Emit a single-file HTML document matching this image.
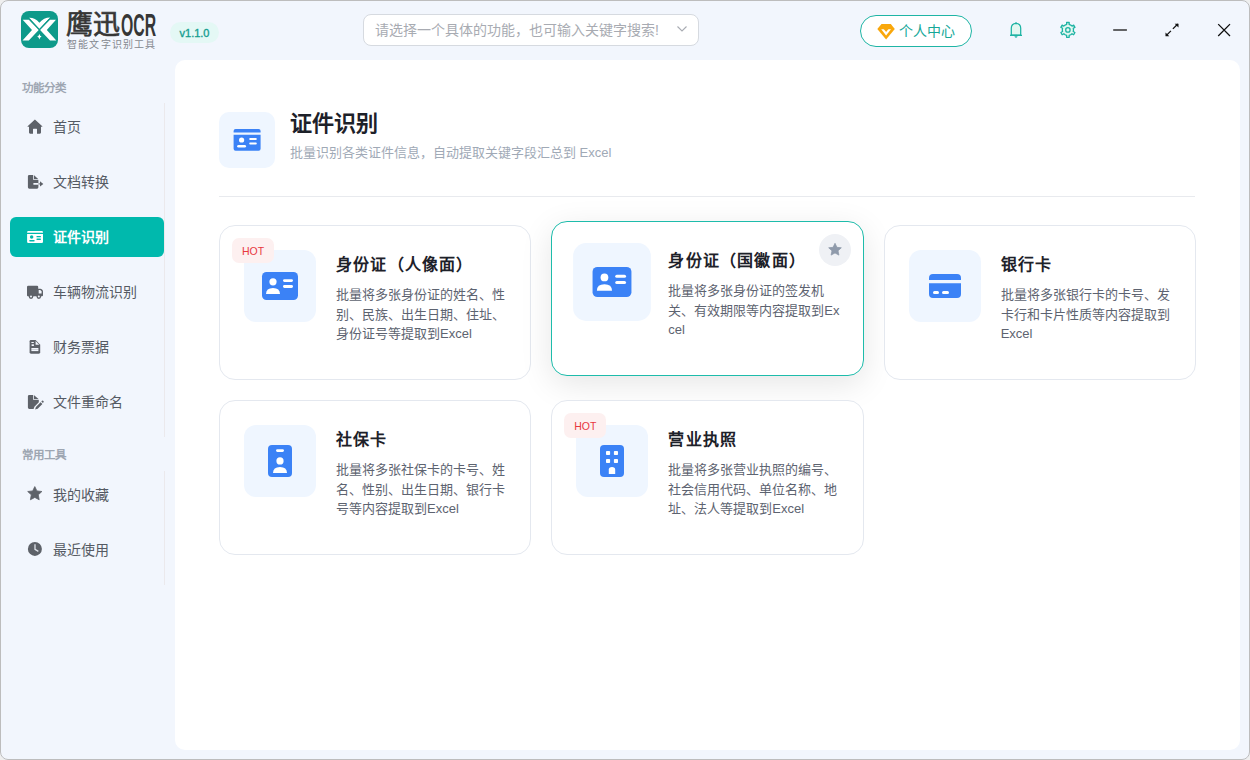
<!DOCTYPE html>
<html lang="zh-CN"><head><meta charset="utf-8">
<style>
*{margin:0;padding:0;box-sizing:border-box}
html,body{width:1250px;height:760px;overflow:hidden;background:#efefef}
body{font-family:"Liberation Sans",sans-serif;position:relative;text-spacing-trim:space-all}
.win{position:absolute;left:0;top:0;width:1250px;height:760px;background:#f2f6fd;border-radius:8px;overflow:hidden}
.frame{position:absolute;left:0;top:0;width:1250px;height:760px;border:1px solid #bdbdbd;border-radius:8px;pointer-events:none}
.abs{position:absolute}
.logo{left:21px;top:11.2px;width:37px;height:37px}
.brand{left:66px;top:10px;font-size:27px;font-weight:normal;-webkit-text-stroke:0.7px #363636;color:#363636;letter-spacing:0px;line-height:30px}
.ocr{left:121px;top:8.5px;font-size:31px;color:#363636;line-height:34px;transform:scaleX(0.51);transform-origin:0 0;font-weight:bold}
.sub{left:67px;top:38.5px;font-size:10px;color:#84888f;letter-spacing:1.2px;line-height:12px}
.ver{left:170px;top:22px;width:49px;height:21px;border-radius:11px;background:#e4f8f5;color:#179e90;font-size:11px;line-height:23px;text-align:center;-webkit-text-stroke:0.35px #179e90}
.search{left:363px;top:14px;width:336px;height:32px;border:1px solid #d6dae0;border-radius:8px;background:#fff}
.search span{position:absolute;left:11px;top:7px;font-size:14px;line-height:16px;color:#a8abb2}
.pc{left:860px;top:15px;width:112px;height:32px;border:1px solid #1fb5a5;border-radius:16px;color:#15a898;font-size:14px;line-height:30px;background:#fff}
.side-label{font-size:11.5px;color:#9ea6b2;font-weight:bold;left:22px}
.item{left:10px;width:154px;height:40px;border-radius:6px;color:#555a63;font-size:14px}
.item span{position:absolute;left:43px;top:11px;line-height:18px}
.item svg{position:absolute;left:0;top:0}
.item.active{background:#00b9ad;color:#fff;font-weight:bold}
.vline{left:164px;width:1px;background:#ebe9ec}
.panel{left:175px;top:60px;width:1065px;height:690px;background:#fff;border-radius:10px}
.hicon{left:219px;top:112px;width:56px;height:56px;border-radius:10px;background:#eff6ff}
.htitle{left:290px;top:110px;font-size:22px;font-weight:bold;color:#1d2129;line-height:28px}
.hsub{left:290px;top:144px;font-size:13px;color:#a0a9b6;line-height:18px}
.hline{left:219px;top:196px;width:976px;height:1px;background:#e8eaee}
.card{width:312.33px;height:155px;border:1px solid #e4e8ef;border-radius:16px;background:#fff}
.card .ib{position:absolute;left:24px;top:24px;width:72px;height:72px;border-radius:12px;background:#eff6ff}
.card .ib svg{position:absolute;left:18px;top:18px}
.card .t{position:absolute;left:116px;top:28px;font-size:16px;font-weight:bold;color:#1d2129;line-height:22px;letter-spacing:1.2px}
.card .d{position:absolute;left:116px;top:59px;width:174px;word-break:break-all;font-size:13px;color:#5d6370;line-height:19.5px}
.hot{position:absolute;left:12px;top:12px;width:42px;height:25px;border-radius:7px;background:#fdf0f0;color:#e8383f;font-size:10.5px;line-height:27px;text-align:center}
.card.hov{border-color:#1ebcab;box-shadow:0 8px 32px rgba(0,0,0,.10)}
.star{position:absolute;width:32px;height:32px;border-radius:16px;background:#eff1f5}
</style></head><body>
<div class="win">
  <!-- logo -->
  <svg class="abs logo" viewBox="0 0 37 37"><rect x="0" y="0" width="37" height="37" rx="8" fill="#0e9a8a"/>
<polygon fill="#fff" points="1.7,8.7 7.8,8.7 17.7,19.1 7.8,29.5 1.5,29.5 11,19.1"/>
<polygon fill="#fff" points="35,8.7 29,8.7 19.1,19.1 29,29.5 35.3,29.5 25.8,19.1"/>
<path fill="#fff" d="M8.1,6.7 Q14,6.5 18.4,11.7 Q22.8,6.5 29.1,6.5 L18.4,17.7 Z"/>
<path stroke="#0e9a8a" stroke-width="0.9" d="M8.2,7.6 L18.4,18.6 L28.6,7.6" fill="none"/>
<path fill="#fff" d="M18.4,22.9 Q18.9,25 20.6,25.5 Q18.9,26 18.4,28.4 Q17.9,26 16.2,25.5 Q17.9,25 18.4,22.9Z"/>
</svg>
  <div class="abs brand">鹰迅</div><div class="abs ocr">OCR</div>
  <div class="abs sub">智能文字识别工具</div>
  <div class="abs ver">v1.1.0</div>
  <div class="abs search"><span>请选择一个具体的功能，也可输入关键字搜索!</span></div>
  <div class="abs pc"><span style="position:absolute;left:38px;top:0">个人中心</span></div>

  <svg class="abs" style="left:0;top:0" width="1250" height="60" viewBox="0 0 1250 60">
<path fill="#f9a70b" d="M881.5,24 L890.8,24 L894.8,29 L886.1,39.4 L877.3,29Z"/>
<path fill="#fff" d="M881.2,29.3 L891,29.3 L886.1,35.6Z"/><path fill="#f9a70b" d="M883.7,29 L888.5,29 L886.1,31.9Z"/>
<path fill="#e3f7f1" stroke="#1db3a3" stroke-width="1.25" d="M1011.3,35 L1011.3,28.2 Q1011.3,23.5 1016,23.3 Q1020.7,23.5 1020.7,28.2 L1020.7,35Z"/>
<path stroke="#1db3a3" stroke-width="1.3" d="M1010,35.3 L1022,35.3" fill="none"/>
<path fill="#1db3a3" opacity="0.75" d="M1014.4,36 L1017.6,36 Q1017.2,37.9 1016,37.9 Q1014.8,37.9 1014.4,36Z"/>
<rect x="1015.4" y="22.2" width="1.2" height="1.6" fill="#1db3a3"/>
<g transform="translate(1067.9,29.9)">
<path fill="#e3f7f1" stroke="#1db3a3" stroke-width="1.3" stroke-linejoin="round" d="M-2.80,-4.85 L-1.26,-5.46 L-1.30,-7.39 L1.30,-7.39 L1.26,-5.46 L2.80,-4.85 L4.10,-3.82 L5.75,-4.82 L7.05,-2.57 L5.36,-1.64 L5.60,0.00 L5.36,1.64 L7.05,2.57 L5.75,4.82 L4.10,3.82 L2.80,4.85 L1.26,5.46 L1.30,7.39 L-1.30,7.39 L-1.26,5.46 L-2.80,4.85 L-4.10,3.82 L-5.75,4.82 L-7.05,2.57 L-5.36,1.64 L-5.60,-0.00 L-5.36,-1.64 L-7.05,-2.57 L-5.75,-4.82 L-4.10,-3.82Z"/>
<circle r="2.2" fill="none" stroke="#1db3a3" stroke-width="1.3"/>
</g>
<path stroke="#333" stroke-width="1.6" d="M1113.2,30 L1126.9,30" fill="none"/>
<path stroke="#111" stroke-width="1.3" d="M1166.2,35.6 L1170.9,30.9 M1172.9,28.9 L1177.8,24" fill="none"/>
<path fill="#111" d="M1165.5,36.3 L1165.5,32.5 L1169.3,36.3Z M1178.5,23.8 L1178.5,27.6 L1174.7,23.8Z"/>
<path stroke="#111" stroke-width="1.3" d="M1218.2,24.1 L1230,36 M1230,24.1 L1218.2,36" fill="none"/>
<path stroke="#a8abb2" stroke-width="1.1" d="M677.5,26.5 L682,31 L686.5,26.5" fill="none"/>
</svg>
  <div class="abs side-label" style="top:79px">功能分类</div>
  <div class="abs item" style="top:107px"><svg width="40" height="40" viewBox="0 0 40 40"><path fill="#5e6269" d="M24.9,12.6 L17.6,19.2 Q17.3,19.8 18,19.8 L19,19.8 L19,25.6 Q19,26.7 20.1,26.7 L23,26.7 L23,22.2 Q23,21.7 23.5,21.7 L26.5,21.7 Q27,21.7 27,22.2 L27,26.7 L29.9,26.7 Q31,26.7 31,25.6 L31,19.8 L32,19.8 Q32.6,19.8 32.3,19.2 Z"/></svg><span>首页</span></div>
  <div class="abs item" style="top:162px"><svg width="40" height="40" viewBox="0 0 40 40"><path fill="#5e6269" d="M19.3,12.9 L23,12.9 L23,17 Q23,18 24,18 L28.4,18 L28.4,21 L23.4,21 L23.4,22.8 L28.4,22.8 L28.4,25.3 Q28.4,26.7 27,26.7 L19.3,26.7 Q17.9,26.7 17.9,25.3 L17.9,14.3 Q17.9,12.9 19.3,12.9Z M23.8,12.9 L28.4,17.3 L23.8,17.3Z"/><rect x="28.4" y="21.3" width="2" height="1.2" fill="#5e6269" opacity="0.8"/><path fill="#5e6269" d="M30,19.2 L33.3,21.9 L30,24.4Z"/></svg><span>文档转换</span></div>
  <div class="abs item active" style="top:217px"><svg width="40" height="40" viewBox="0 0 40 40"><path fill="#fff" d="M18.3,14 L31.8,14 Q33,14 33,15.2 L33,15.8 L17.1,15.8 L17.1,15.2 Q17.1,14 18.3,14Z M17.1,17.1 L33,17.1 L33,24.8 Q33,26 31.8,26 L18.3,26 Q17.1,26 17.1,24.8Z"/><circle cx="21.65" cy="19.9" r="1.75" fill="#00b9ad"/><rect x="19.2" y="23" width="5.5" height="1.5" rx="0.75" fill="#00b9ad"/><rect x="26.4" y="19.1" width="4.6" height="1.2" rx="0.6" fill="#00b9ad"/><rect x="26.4" y="21.5" width="4.6" height="1.5" rx="0.75" fill="#00b9ad"/></svg><span>证件识别</span></div>
  <div class="abs item" style="top:272px"><svg width="40" height="40" viewBox="0 0 40 40"><path fill="#5e6269" d="M18.2,13.8 L27,13.8 Q28.2,13.8 28.2,15 L28.2,16.8 L30.4,16.8 Q31.3,16.8 32,17.5 L32.5,18.1 Q33,18.7 33,19.4 L33,23.3 Q33,24.3 32,24.3 L17.9,24.3 Q17,24.3 17,23.3 L17,15 Q17,13.8 18.2,13.8Z"/><path fill="#f2f6fd" d="M28.7,18.1 L30.3,18.1 L31.6,19.6 L31.6,21.5 L28.7,21.5Z"/><circle cx="21" cy="24.6" r="2.3" fill="#5e6269"/><circle cx="21" cy="24.6" r="1" fill="#f2f6fd"/><circle cx="28.8" cy="24.6" r="2.3" fill="#5e6269"/><circle cx="28.8" cy="24.6" r="1" fill="#f2f6fd"/></svg><span>车辆物流识别</span></div>
  <div class="abs item" style="top:327px"><svg width="40" height="40" viewBox="0 0 40 40"><path fill="#5e6269" d="M20.9,12.9 L25.6,12.9 L30.2,17.7 L30.2,25.3 Q30.2,26.7 28.8,26.7 L21,26.7 Q19.6,26.7 19.6,25.3 L19.6,14.2 Q19.6,12.9 20.9,12.9Z"/><path fill="#f2f6fd" d="M25.6,14 L29.2,17.7 L25.6,17.7Z"/><rect x="21.4" y="15" width="2.4" height="1" fill="#f2f6fd"/><rect x="21.6" y="17.3" width="2.3" height="1.7" fill="#f2f6fd"/><rect x="21.4" y="21" width="7" height="3.1" fill="#f2f6fd"/><rect x="21.4" y="22.3" width="7" height="0.6" fill="#5e6269" opacity="0.4"/></svg><span>财务票据</span></div>
  <div class="abs item" style="top:382px"><svg width="40" height="40" viewBox="0 0 40 40"><path fill="#5e6269" d="M19.3,12.9 L23,12.9 L23,17 Q23,18 24,18 L28.8,18 L28.8,20.2 L24.4,24.8 L23.6,26.9 L19.3,26.9 Q17.9,26.9 17.9,25.5 L17.9,14.3 Q17.9,12.9 19.3,12.9Z M23.8,12.9 L28.8,17.3 L23.8,17.3Z"/><path fill="#5e6269" d="M25.1,27.6 L25.9,24.9 L30.6,20.2 L32.4,22 L27.7,26.7Z M31.3,19.5 L32,18.8 Q32.6,18.3 33.1,18.8 L33.6,19.3 Q34,19.8 33.5,20.3 L32.9,21Z"/></svg><span>文件重命名</span></div>
  <div class="abs side-label" style="top:446px">常用工具</div>
  <div class="abs item" style="top:475px"><svg width="40" height="40" viewBox="0 0 40 40"><path fill="#5e6269" stroke="#5e6269" stroke-width="0.8" stroke-linejoin="round" d="M24.8,11.6 L26.9,15.9 L31.9,16.5 L28.3,19.8 L29.2,24.8 L24.8,22.4 L20.4,24.8 L21.3,19.8 L17.7,16.5 L22.7,15.9Z"/></svg><span>我的收藏</span></div>
  <div class="abs item" style="top:530px"><svg width="40" height="40" viewBox="0 0 40 40"><circle cx="24.9" cy="18.9" r="7" fill="#5e6269"/><path d="M25,15 L25,19.3 L27.8,21" stroke="#dfe3ea" stroke-width="1.3" fill="none" stroke-linecap="square"/></svg><span>最近使用</span></div>
  <div class="abs vline" style="top:103px;height:334px"></div>
  <div class="abs vline" style="top:471px;height:114px"></div>

  <div class="abs panel"></div>
  <div class="abs hicon"><svg width="56" height="56" viewBox="0 0 56 56" style="position:absolute;left:0;top:0"><path fill="#3b82f6" d="M16.6,17 L39.6,17 Q41.6,17 41.6,19 L41.6,20.5 L14.6,20.5 L14.6,19 Q14.6,17 16.6,17Z M14.6,22.8 L41.6,22.8 L41.6,36.7 Q41.6,38.7 39.6,38.7 L16.6,38.7 Q14.6,38.7 14.6,36.7Z"/><circle cx="22.6" cy="28" r="2.6" fill="#fff"/><rect x="18.2" y="33" width="8.8" height="2.6" rx="1.3" fill="#fff"/><rect x="30.2" y="26.1" width="7.6" height="1.9" rx="0.95" fill="#fff"/><rect x="30.2" y="30.5" width="7.6" height="1.9" rx="0.95" fill="#fff"/></svg></div>
  <div class="abs htitle">证件识别</div>
  <div class="abs hsub">批量识别各类证件信息，自动提取关键字段汇总到 Excel</div>
  <div class="abs hline"></div>

  <div class="abs card" style="left:219px;top:225px">
    <div class="ib"><svg width="72" height="72" viewBox="0 0 72 72" style="position:absolute;left:0;top:0"><rect x="18" y="22" width="36" height="28" rx="4.5" fill="#3b82f6"/><circle cx="29" cy="31.8" r="3.6" fill="#fff"/><path d="M22,44 Q22,38 29,38 Q36,38 36,44Z" fill="#fff"/><rect x="39" y="29.2" width="10" height="2.8" rx="1.4" fill="#fff"/><rect x="39" y="35.1" width="10" height="2.8" rx="1.4" fill="#fff"/></svg></div><div class="hot">HOT</div>
    <div class="t">身份证（人像面）</div>
    <div class="d">批量将多张身份证的姓名、性别、民族、出生日期、住址、身份证号等提取到Excel</div>
  </div>
  <div class="abs card hov" style="left:551.33px;top:221px">
    <div class="ib" style="transform:scale(1.08)"><svg width="72" height="72" viewBox="0 0 72 72" style="position:absolute;left:0;top:0"><rect x="18" y="22" width="36" height="28" rx="4.5" fill="#3b82f6"/><circle cx="29" cy="31.8" r="3.6" fill="#fff"/><path d="M22,44 Q22,38 29,38 Q36,38 36,44Z" fill="#fff"/><rect x="39" y="29.2" width="10" height="2.8" rx="1.4" fill="#fff"/><rect x="39" y="35.1" width="10" height="2.8" rx="1.4" fill="#fff"/></svg></div>
    <div class="t">身份证（国徽面）</div>
    <div class="d">批量将多张身份证的签发机关、有效期限等内容提取到Excel</div>
    <div class="star" style="left:267px;top:12px"><svg width="32" height="32" viewBox="0 0 32 32" style="position:absolute;left:0;top:0"><path fill="#8f9aab" stroke="#8f9aab" stroke-width="0.8" stroke-linejoin="round" d="M16,9.3 L17.9,13.3 L22.3,13.8 L19,16.8 L19.9,21.1 L16,18.9 L12.1,21.1 L13,16.8 L9.7,13.8 L14.1,13.3Z"/></svg></div>
  </div>
  <div class="abs card" style="left:883.67px;top:225px">
    <div class="ib"><svg width="72" height="72" viewBox="0 0 72 72" style="position:absolute;left:0;top:0"><path d="M24,24 L48,24 Q52,24 52,28 L52,30 L20,30 L20,28 Q20,24 24,24Z M20,33.2 L52,33.2 L52,44 Q52,48 48,48 L24,48 Q20,48 20,44Z" fill="#3b82f6"/><rect x="24" y="41" width="6" height="3" rx="1.5" fill="#fff"/><rect x="33" y="41" width="7" height="3" rx="1.5" fill="#fff"/></svg></div>
    <div class="t">银行卡</div>
    <div class="d">批量将多张银行卡的卡号、发卡行和卡片性质等内容提取到Excel</div>
  </div>
  <div class="abs card" style="left:219px;top:400px">
    <div class="ib"><svg width="72" height="72" viewBox="0 0 72 72" style="position:absolute;left:0;top:0"><rect x="24" y="20" width="24" height="32" rx="4" fill="#3b82f6"/><rect x="32" y="24.2" width="8" height="2.8" rx="1.4" fill="#fff"/><circle cx="36" cy="35.9" r="3.6" fill="#fff"/><path d="M29,48 Q29,42 36,42 Q43,42 43,48Z" fill="#fff"/></svg></div>
    <div class="t">社保卡</div>
    <div class="d">批量将多张社保卡的卡号、姓名、性别、出生日期、银行卡号等内容提取到Excel</div>
  </div>
  <div class="abs card" style="left:551.33px;top:400px">
    <div class="ib"><svg width="72" height="72" viewBox="0 0 72 72" style="position:absolute;left:0;top:0"><rect x="24" y="20" width="24" height="32" rx="4" fill="#3b82f6"/><rect x="30" y="26" width="4.1" height="4.1" rx="0.8" fill="#fff"/><rect x="37.9" y="26" width="4.1" height="4.1" rx="0.8" fill="#fff"/><rect x="30" y="33.9" width="4.1" height="4.1" rx="0.8" fill="#fff"/><rect x="37.9" y="33.9" width="4.1" height="4.1" rx="0.8" fill="#fff"/><path d="M32.8,49 L32.8,44.5 Q32.8,42 36,42 Q39.2,42 39.2,44.5 L39.2,49Z" fill="#fff"/></svg></div><div class="hot">HOT</div>
    <div class="t">营业执照</div>
    <div class="d">批量将多张营业执照的编号、社会信用代码、单位名称、地址、法人等提取到Excel</div>
  </div>
</div>
<div class="frame"></div>
</body></html>
